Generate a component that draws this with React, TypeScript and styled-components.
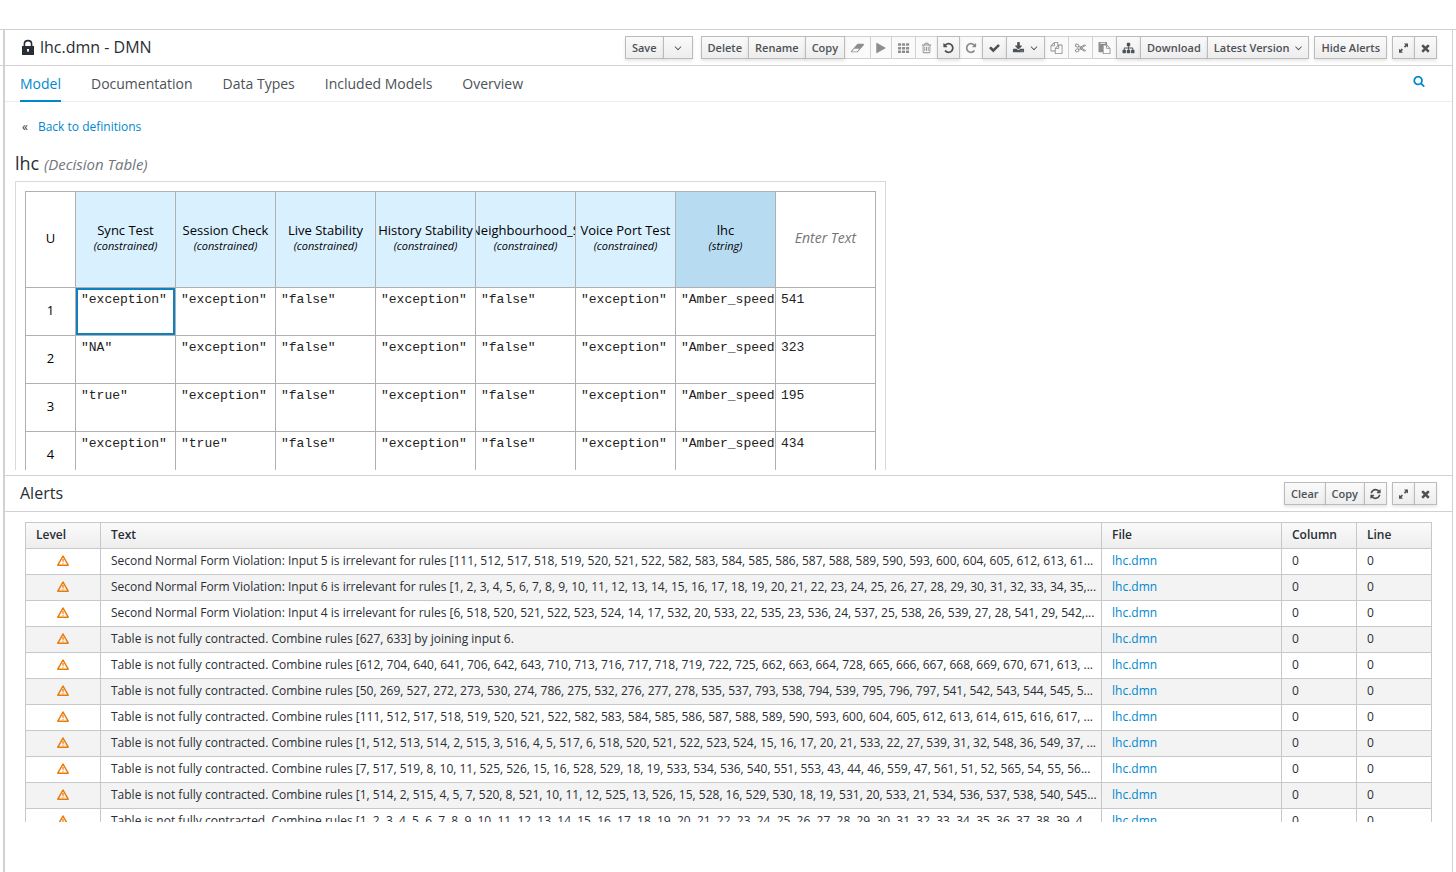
import React from "react";
import styled, { createGlobalStyle } from "styled-components";

const GlobalStyle = createGlobalStyle`
  *, *::before, *::after { box-sizing: border-box; }
  body {
    margin: 0;
    background: #fff;
    color: #363636;
    font-family: "Open Sans", "Noto Sans", sans-serif;
    font-size: 12px;
    line-height: 20px;
  }
  a { color: #0088ce; text-decoration: none; }
`;

/* ---------- icons ---------- */

const paths = {
  eraser:
    "M960 1408l336-384h-768l-336 384h768zm1013-1077q15 34 9.5 71.5t-30.5 65.5l-896 1024q-38 44-96 44h-768q-38 0-69.5-20.5t-47.5-54.5q-15-34-9.5-71.5t30.5-65.5l896-1024q38-44 96-44h768q38 0 69.5 20.5t47.5 54.5z",
  play: "M1576 927l-1328 738q-23 13-39.5 3t-16.5-36v-1472q0-26 16.5-36t39.5 3l1328 738q23 13 23 31t-23 31z",
  trash:
    "M704 736v576q0 14-9 23t-23 9h-64q-14 0-23-9t-9-23v-576q0-14 9-23t23-9h64q14 0 23 9t9 23zm256 0v576q0 14-9 23t-23 9h-64q-14 0-23-9t-9-23v-576q0-14 9-23t23-9h64q14 0 23 9t9 23zm256 0v576q0 14-9 23t-23 9h-64q-14 0-23-9t-9-23v-576q0-14 9-23t23-9h64q14 0 23 9t9 23zm128 724v-948h-896v948q0 22 7 40.5t14.5 27 10.5 8.5h832q3 0 10.5-8.5t14.5-27 7-40.5zm-672-1076h448l-48-117q-7-9-17-11h-317q-10 2-17 11zm928 32v64q0 14-9 23t-23 9h-96v948q0 83-47 143.5t-113 60.5h-832q-66 0-113-58.5t-47-141.5v-952h-96q-14 0-23-9t-9-23v-64q0-14 9-23t23-9h309l70-167q15-37 54-63t79-26h320q40 0 79 26t54 63l70 167h309q14 0 23 9t9 23z",
  undo: "M1664 896q0 156-61 298t-164 245-245 164-298 61q-172 0-327-72.5t-264-204.5q-7-10-6.5-22.5t8.5-20.5l137-138q10-9 25-9 16 2 23 12 73 95 179 147t225 52q104 0 198.5-40.5t163.5-109.5 109.5-163.5 40.5-198.5-40.5-198.5-109.5-163.5-163.5-109.5-198.5-40.5q-98 0-188 35.5t-160 101.5l137 138q31 30 14 69-17 40-59 40h-448q-26 0-45-19t-19-45v-448q0-42 40-59 39-17 69 14l130 129q107-101 244.5-156.5t284.5-55.5q156 0 298 61t245 164 164 245 61 298z",
  check:
    "M1671 566q0 40-28 68l-724 724-136 136q-28 28-68 28t-68-28l-136-136-362-362q-28-28-28-68t28-68l136-136q28-28 68-28t68 28l294 295 656-657q28-28 68-28t68 28l136 136q28 28 28 68z",
  download:
    "M1344 1344q0-26-19-45t-45-19-45 19-19 45 19 45 45 19 45-19 19-45zm256 0q0-26-19-45t-45-19-45 19-19 45 19 45 45 19 45-19 19-45zm128-224v320q0 40-28 68t-68 28h-1472q-40 0-68-28t-28-68v-320q0-40 28-68t68-28h465l135 136q58 56 136 56t136-56l136-136h464q40 0 68 28t28 68zm-325-569q17 41-14 70l-448 448q-18 19-45 19t-45-19l-448-448q-31-29-14-70 17-39 59-39h256v-448q0-26 19-45t45-19h256q26 0 45 19t19 45v448h256q42 0 59 39z",
  caret:
    "M1395 736q0 13-10 23l-466 466q-10 10-23 10t-23-10l-466-466q-10-10-10-23t10-23l50-50q10-10 23-10t23 10l393 393 393-393q10-10 23-10t23 10l50 50q10 10 10 23z",
  copy: "M1696 384q40 0 68 28t28 68v1216q0 40-28 68t-68 28h-960q-40 0-68-28t-28-68v-288h-544q-40 0-68-28t-28-68v-672q0-40 20-88t48-76l408-408q28-28 76-48t88-20h416q40 0 68 28t28 68v328q68-40 128-40h416zm-544 213l-299 299h299v-299zm-640-384l-299 299h299v-299zm196 647l316-316v-416h-384v416q0 40-28 68t-68 28h-416v640h512v-256q0-40 20-88t48-76zm956 804v-1152h-384v416q0 40-28 68t-68 28h-416v640h896z",
  paste:
    "M768 1664h896v-640h-416q-40 0-68-28t-28-68v-416h-384v1152zm256-1440v-64q0-13-9.5-22.5t-22.5-9.5h-704q-13 0-22.5 9.5t-9.5 22.5v64q0 13 9.5 22.5t22.5 9.5h704q13 0 22.5-9.5t9.5-22.5zm256 672h299l-299-299v299zm512 128v672q0 40-28 68t-68 28h-960q-40 0-68-28t-28-68v-160h-544q-40 0-68-28t-28-68v-1344q0-40 28-68t68-28h1088q40 0 68 28t28 68v328q21 13 36 28l408 408q28 28 48 76t20 88z",
  sitemap:
    "M1792 1248v320q0 40-28 68t-68 28h-320q-40 0-68-28t-28-68v-320q0-40 28-68t68-28h96v-192h-512v192h96q40 0 68 28t28 68v320q0 40-28 68t-68 28h-320q-40 0-68-28t-28-68v-320q0-40 28-68t68-28h96v-192h-512v192h96q40 0 68 28t28 68v320q0 40-28 68t-68 28h-320q-40 0-68-28t-28-68v-320q0-40 28-68t68-28h96v-192q0-52 38-90t90-38h512v-192h-96q-40 0-68-28t-28-68v-320q0-40 28-68t68-28h320q40 0 68 28t28 68v320q0 40-28 68t-68 28h-96v192h512q52 0 90 38t38 90v192h96q40 0 68 28t28 68z",
  times:
    "M1490 1322q0 40-28 68l-136 136q-28 28-68 28t-68-28l-294-294-294 294q-28 28-68 28t-68-28l-136-136q-28-28-28-68t28-68l294-294-294-294q-28-28-28-68t28-68l136-136q28-28 68-28t68 28l294 294 294-294q28-28 68-28t68 28l136 136q28 28 28 68t-28 68l-294 294 294 294q28 28 28 68z",
  search:
    "M1216 832q0-185-131.5-316.5t-316.5-131.5-316.5 131.5-131.5 316.5 131.5 316.5 316.5 131.5 316.5-131.5 131.5-316.5zm512 832q0 52-38 90t-90 38q-54 0-90-38l-343-342q-179 124-399 124-143 0-273.5-55.5t-225-150-150-225-55.5-273.5 55.5-273.5 150-225 225-150 273.5-55.5 273.5 55.5 225 150 150 225 55.5 273.5q0 220-124 399l343 343q37 37 37 90z",
  refresh:
    "M1639 1056q0 5-1 7-64 268-268 434.5t-478 166.5q-146 0-282.5-55t-243.5-157l-129 129q-19 19-45 19t-45-19-19-45v-448q0-26 19-45t45-19h448q26 0 45 19t19 45-19 45l-137 137q71 66 161 102t187 36q134 0 250-65t186-179q11-17 53-117 8-23 30-23h192q13 0 22.5 9.5t9.5 22.5zm25-800v448q0 26-19 45t-45 19h-448q-26 0-45-19t-19-45 19-45l138-138q-148-137-349-137-134 0-250 65t-186 179q-11 17-53 117-8 23-30 23h-199q-13 0-22.5-9.5t-9.5-22.5v-7q65-268 270-434.5t480-166.5q146 0 284 55.5t245 156.5l130-129q19-19 45-19t45 19 19 45z",
};

const Svg = styled.svg`
  display: block;
  flex: none;
  overflow: visible;
  fill: currentColor;
`;

/* Glyphs live on a 1792-unit em square that is 12px high. */
const Glyph = ({
  name,
  width,
  center = 896,
  mirrored = false,
}: {
  name: keyof typeof paths;
  width: number;
  center?: number;
  mirrored?: boolean;
}) => {
  const w = Math.round((width / 12) * 1792);
  return (
    <Svg width={width} height={12} viewBox={`${center - w / 2} 0 ${w} 1792`} aria-hidden>
      <path d={paths[name]} transform={mirrored ? "translate(1792 0) scale(-1 1)" : undefined} />
    </Svg>
  );
};

const GridIcon = () => (
  <Svg width={11} height={12} viewBox="0 0 11 12" aria-hidden>
    {[1.3, 4.9, 8.5].map((y) =>
      [0, 4, 8].map((x) => <rect key={`${x}-${y}`} x={x} y={y} width={3.1} height={2.5} rx={0.5} />)
    )}
  </Svg>
);

const ScissorsIcon = () => (
  <Svg width={11} height={12} viewBox="0 0 11 12" aria-hidden>
    <g fill="none" stroke="currentColor" strokeWidth={1}>
      <ellipse cx={2.2} cy={3.6} rx={1.8} ry={1.4} transform="rotate(25 2.2 3.6)" />
      <ellipse cx={2.2} cy={8.4} rx={1.8} ry={1.4} transform="rotate(-25 2.2 8.4)" />
      <path d="M3.7 4.4 6 5.8 10.6 8.6 9.4 9 5 6.8M3.7 7.6 6 6.2 10.6 3.4 9.4 3 5 5.2" />
    </g>
  </Svg>
);

const ExpandIcon = () => (
  <Svg width={9} height={12} viewBox="0 0 9 12" aria-hidden>
    <path d="M5 1.5h4v4L7.7 4.2 6.1 5.8 4.9 4.6 6.4 3zM0 6.8l1.3 1.3 1.5-1.5L4 7.8 2.5 9.3 4 10.8H0z" />
  </Svg>
);

const LockIcon = () => (
  <Svg width={12} height={16} viewBox="0 0 12 16" aria-hidden>
    <path d="M2.4 7.2V4.9C2.4 2.7 3.8 1.6 6 1.6s3.6 1.1 3.6 3.3v2.3" fill="none" stroke="currentColor" strokeWidth={1.6} />
    <path fillRule="evenodd" d="M0 7h12v9H0zM5 10v1.6l.4.3V13h1.2v-1.1l.4-.3V10z" />
  </Svg>
);

const WarningSvg = styled(Svg)`
  margin: 0 auto;
  color: #ec7a08;
`;

const WarningIcon = () => (
  <WarningSvg width={12} height={11} viewBox="0 0 12 11" role="img" aria-label="Warning">
    <path d="M6 1 11.2 10.2H.8z" fill="none" stroke="currentColor" strokeWidth={1.5} strokeLinejoin="round" />
    <path d="M5.3 4h1.4L6.5 7.1h-1zM5.4 7.7h1.2v1.1H5.4z" />
  </WarningSvg>
);

/* ---------- shell ---------- */

const Page = styled.div`
  display: flex;
  flex-direction: column;
  height: 100vh;
  min-height: 600px;
  padding-top: 29px;
  overflow: hidden;
`;

const Frame = styled.div`
  flex: 1;
  min-height: 0;
  display: flex;
  border-top: 1px solid #d1d1d1;
  padding-right: 3px;
`;

const Gutter = styled.div`
  flex: none;
  width: 3px;

  &::before {
    content: "";
    display: block;
    height: 36px;
    border-bottom: 1px solid #d1d1d1;
  }
`;

const Workbench = styled.main`
  flex: 1;
  min-width: 0;
  display: flex;
  flex-direction: column;
  border-left: 2px solid #d1d1d1;
  border-right: 1px solid #d1d1d1;
`;

const Bar = styled.header`
  flex: none;
  display: flex;
  align-items: center;
  justify-content: space-between;
  height: 36px;
  padding: 0 15px;
  border-bottom: 1px solid #d1d1d1;
`;

const Title = styled.h1<{ $indented?: boolean }>`
  display: flex;
  align-items: center;
  gap: 6px;
  margin: 0;
  padding: 0 0 2px ${(p) => (p.$indented ? "2px" : "0")};
  font-size: 16px;
  font-weight: 400;
  color: #292e34;
`;

const Toolbar = styled.div`
  display: flex;
  gap: 5px;
`;

const Group = styled.div<{ $spaced?: boolean }>`
  display: flex;
  margin-right: ${(p) => (p.$spaced ? "3px" : "0")};

  & > * + * { margin-left: -1px; }
`;

const Button = styled.button<{ $wide?: boolean }>`
  display: flex;
  align-items: center;
  justify-content: center;
  gap: 6px;
  height: 23px;
  padding: 0 ${(p) => (p.$wide ? "10px" : "6px")};
  border: 1px solid #bbb;
  background: linear-gradient(#fafafa, #ededed);
  box-shadow: 0 2px 3px rgba(3, 3, 3, 0.1);
  color: #4d5258;
  font: 600 11px/20px "Open Sans", "Noto Sans", sans-serif;
  white-space: nowrap;
  cursor: pointer;

  &:disabled {
    border-color: #d1d1d1;
    background: #fafafa;
    box-shadow: none;
    color: #8b8d8f;
    cursor: default;
  }

  &:enabled { position: relative; }
`;

/* ---------- tabs ---------- */

const Tabs = styled.nav`
  flex: none;
  display: flex;
  align-items: stretch;
  gap: 30px;
  height: 36px;
  padding: 0 27px 0 15px;
  border-bottom: 1px solid #ededed;
`;

const Tab = styled.a<{ $active?: boolean }>`
  height: 36px;
  font-size: 14px;
  line-height: 36px;
  color: ${(p) => (p.$active ? "#0088ce" : "#4d5258")};
  border-bottom: 2px solid ${(p) => (p.$active ? "#0088ce" : "transparent")};
`;

const SearchButton = styled.button`
  margin: 0 0 6px auto;
  padding: 0;
  border: 0;
  background: none;
  color: #0088ce;
  cursor: pointer;
`;

/* ---------- decision table ---------- */

const Designer = styled.section`
  flex: 1 1 0;
  min-height: 0;
  margin: 15px 10px 5px;
  overflow: auto;
  scrollbar-width: none;
`;

const BackLink = styled.div`
  display: flex;
  gap: 10px;
  padding-left: 7px;
  line-height: 20px;
`;

const Heading = styled.h2`
  margin: 14px 0 6px;
  font-size: 18px;
  font-weight: 400;
  line-height: 24px;
  color: #292e34;

  em { font-size: 15px; line-height: 20px; color: #72767b; }
`;

const Canvas = styled.div`
  width: max-content;
  padding: 9px;
  border: 1px solid #d9d9d9;
`;

const Grid = styled.table`
  width: 851px;
  table-layout: fixed;
  border-collapse: collapse;
  color: #000;

  th, td { padding: 0; border: 1px solid #b0b0b0; }
  th { padding-bottom: 4px; }
`;

const IndexCol = styled.col`
  width: 50px;
`;

const HeadCell = styled.th<{ $tone?: "input" | "output" }>`
  height: 96px;
  font-size: 13px;
  font-weight: 400;
  line-height: 16px;
  background: ${(p) => (p.$tone === "input" ? "#d9f0ff" : p.$tone === "output" ? "#b7dcf1" : "#fff")};

  small { font-size: 11px; font-style: italic; }
`;

const HeadLabel = styled.div`
  display: flex;
  flex-direction: column;
  align-items: center;
  overflow: hidden;
  white-space: nowrap;
`;

const Annotation = styled.em`
  font-size: 14px;
  color: #757575;
`;

const IndexCell = styled.th`
  height: 48px;
  font-size: 13px;
  font-weight: 400;
`;

const ValueCell = styled.td<{ $selected?: boolean }>`
  height: 48px;
  vertical-align: top;
  box-shadow: ${(p) => (p.$selected ? "inset 0 0 0 2px #0f80c0" : "none")};
`;

const Value = styled.div`
  padding: 4px 0 0 5px;
  overflow: hidden;
  white-space: nowrap;
  font: 13px/16px "Courier New", "Liberation Mono", monospace;
  color: #222;
`;

const inputs = ["Sync Test", "Session Check", "Live Stability", "History Stability", "Neighbourhood_S", "Voice Port Test"];

const rules = [
  ['"exception"', '"exception"', '"false"', '"exception"', '"false"', '"exception"', '"Amber_speed"', "541"],
  ['"NA"', '"exception"', '"false"', '"exception"', '"false"', '"exception"', '"Amber_speed"', "323"],
  ['"true"', '"exception"', '"false"', '"exception"', '"false"', '"exception"', '"Amber_speed"', "195"],
  ['"exception"', '"true"', '"false"', '"exception"', '"false"', '"exception"', '"Amber_speed"', "434"],
];

const DecisionTable = () => (
  <Canvas>
    <Grid>
      <colgroup>
        <IndexCol />
      </colgroup>
      <thead>
        <tr>
          <HeadCell>U</HeadCell>
          {inputs.map((name) => (
            <HeadCell key={name} $tone="input">
              <HeadLabel>
                {name}
                <small>(constrained)</small>
              </HeadLabel>
            </HeadCell>
          ))}
          <HeadCell $tone="output">
            <HeadLabel>
              lhc
              <small>(string)</small>
            </HeadLabel>
          </HeadCell>
          <HeadCell>
            <Annotation>Enter Text</Annotation>
          </HeadCell>
        </tr>
      </thead>
      <tbody>
        {rules.map((rule, r) => (
          <tr key={r}>
            <IndexCell>{r + 1}</IndexCell>
            {rule.map((value, c) => (
              <ValueCell key={c} $selected={r === 0 && c === 0}>
                <Value>{value}</Value>
              </ValueCell>
            ))}
          </tr>
        ))}
      </tbody>
    </Grid>
  </Canvas>
);

/* ---------- alerts ---------- */

const AlertsPanel = styled.section`
  flex: none;
  border-top: 1px solid #d1d1d1;
  padding-bottom: 50px;
`;

const AlertsScroll = styled.div`
  max-height: 300px;
  margin: 10px 20px 0;
  overflow: auto;
  scrollbar-width: none;
`;

const AlertsTable = styled.table`
  width: 100%;
  table-layout: fixed;
  border-collapse: collapse;
  color: #292e34;

  th, td {
    height: 26px;
    padding: 0 10px 2px;
    border: 1px solid #c8c8c8;
    overflow: hidden;
    white-space: nowrap;
    text-align: left;
    line-height: 20px;
  }
  th { font-weight: 600; }
  thead tr { background: linear-gradient(#fafafa, #ededed); }
  tbody tr:nth-child(even) { background: #f3f3f3; }
`;

const Col = styled.col<{ $width?: number }>`
  width: ${(p) => (p.$width ? `${p.$width}px` : "auto")};
`;

const alerts = [
  "Second Normal Form Violation: Input 5 is irrelevant for rules [111, 512, 517, 518, 519, 520, 521, 522, 582, 583, 584, 585, 586, 587, 588, 589, 590, 593, 600, 604, 605, 612, 613, 61...",
  "Second Normal Form Violation: Input 6 is irrelevant for rules [1, 2, 3, 4, 5, 6, 7, 8, 9, 10, 11, 12, 13, 14, 15, 16, 17, 18, 19, 20, 21, 22, 23, 24, 25, 26, 27, 28, 29, 30, 31, 32, 33, 34, 35,...",
  "Second Normal Form Violation: Input 4 is irrelevant for rules [6, 518, 520, 521, 522, 523, 524, 14, 17, 532, 20, 533, 22, 535, 23, 536, 24, 537, 25, 538, 26, 539, 27, 28, 541, 29, 542,...",
  "Table is not fully contracted. Combine rules [627, 633] by joining input 6.",
  "Table is not fully contracted. Combine rules [612, 704, 640, 641, 706, 642, 643, 710, 713, 716, 717, 718, 719, 722, 725, 662, 663, 664, 728, 665, 666, 667, 668, 669, 670, 671, 613, ...",
  "Table is not fully contracted. Combine rules [50, 269, 527, 272, 273, 530, 274, 786, 275, 532, 276, 277, 278, 535, 537, 793, 538, 794, 539, 795, 796, 797, 541, 542, 543, 544, 545, 5...",
  "Table is not fully contracted. Combine rules [111, 512, 517, 518, 519, 520, 521, 522, 582, 583, 584, 585, 586, 587, 588, 589, 590, 593, 600, 604, 605, 612, 613, 614, 615, 616, 617, ...",
  "Table is not fully contracted. Combine rules [1, 512, 513, 514, 2, 515, 3, 516, 4, 5, 517, 6, 518, 520, 521, 522, 523, 524, 15, 16, 17, 20, 21, 533, 22, 27, 539, 31, 32, 548, 36, 549, 37, ...",
  "Table is not fully contracted. Combine rules [7, 517, 519, 8, 10, 11, 525, 526, 15, 16, 528, 529, 18, 19, 533, 534, 536, 540, 551, 553, 43, 44, 46, 559, 47, 561, 51, 52, 565, 54, 55, 56...",
  "Table is not fully contracted. Combine rules [1, 514, 2, 515, 4, 5, 7, 520, 8, 521, 10, 11, 12, 525, 13, 526, 15, 528, 16, 529, 530, 18, 19, 531, 20, 533, 21, 534, 536, 537, 538, 540, 545...",
  "Table is not fully contracted. Combine rules [1, 2, 3, 4, 5, 6, 7, 8, 9, 10, 11, 12, 13, 14, 15, 16, 17, 18, 19, 20, 21, 22, 23, 24, 25, 26, 27, 28, 29, 30, 31, 32, 33, 34, 35, 36, 37, 38, 39, 4...",
];

const Alerts = () => (
  <AlertsPanel>
    <Bar>
      <Title as="h2">Alerts</Title>
      <Toolbar>
        <Group>
          <Button>Clear</Button>
          <Button>Copy</Button>
          <Button aria-label="Refresh"><Glyph name="refresh" width={9} /></Button>
        </Group>
        <Group>
          <Button aria-label="Expand alerts"><ExpandIcon /></Button>
          <Button aria-label="Close alerts"><Glyph name="times" width={9} /></Button>
        </Group>
      </Toolbar>
    </Bar>
    <AlertsScroll>
      <AlertsTable>
        <colgroup>
          <Col $width={75} />
          <Col />
          <Col $width={180} />
          <Col $width={75} />
          <Col $width={75} />
        </colgroup>
        <thead>
          <tr>
            <th>Level</th>
            <th>Text</th>
            <th>File</th>
            <th>Column</th>
            <th>Line</th>
          </tr>
        </thead>
        <tbody>
          {alerts.map((text) => (
            <tr key={text}>
              <td><WarningIcon /></td>
              <td>{text}</td>
              <td><a href="#lhc">lhc.dmn</a></td>
              <td>0</td>
              <td>0</td>
            </tr>
          ))}
        </tbody>
      </AlertsTable>
    </AlertsScroll>
  </AlertsPanel>
);

const tabs = ["Model", "Documentation", "Data Types", "Included Models", "Overview"];

export default function App() {
  return (
    <Page>
      <GlobalStyle />
      <Frame>
        <Gutter />
        <Workbench>
          <Bar>
            <Title $indented>
              <LockIcon />
              lhc.dmn - DMN
            </Title>
            <Toolbar>
              <Group $spaced>
                <Button>Save</Button>
                <Button $wide aria-label="Save options"><Glyph name="caret" width={8} /></Button>
              </Group>
              <Group>
                <Button>Delete</Button>
                <Button>Rename</Button>
                <Button>Copy</Button>
                <Button disabled aria-label="Erase"><Glyph name="eraser" width={13} center={1024} /></Button>
                <Button disabled aria-label="Run"><Glyph name="play" width={8} /></Button>
                <Button disabled aria-label="Grid"><GridIcon /></Button>
                <Button disabled aria-label="Remove"><Glyph name="trash" width={9} /></Button>
                <Button aria-label="Undo"><Glyph name="undo" width={9} /></Button>
                <Button disabled aria-label="Redo"><Glyph name="undo" width={10} mirrored /></Button>
                <Button aria-label="Validate"><Glyph name="check" width={11} /></Button>
                <Button aria-label="Export">
                  <Glyph name="download" width={11} />
                  <Glyph name="caret" width={8} />
                </Button>
                <Button disabled aria-label="Copy selection"><Glyph name="copy" width={11} /></Button>
                <Button disabled aria-label="Cut selection"><ScissorsIcon /></Button>
                <Button disabled aria-label="Paste selection"><Glyph name="paste" width={11} /></Button>
                <Button aria-label="Layout"><Glyph name="sitemap" width={11} /></Button>
                <Button>Download</Button>
                <Button>
                  Latest Version
                  <Glyph name="caret" width={7} />
                </Button>
              </Group>
              <Group>
                <Button>Hide Alerts</Button>
              </Group>
              <Group>
                <Button aria-label="Expand"><ExpandIcon /></Button>
                <Button aria-label="Close"><Glyph name="times" width={9} /></Button>
              </Group>
            </Toolbar>
          </Bar>
          <Tabs>
            {tabs.map((tab, i) => (
              <Tab key={tab} href="#tab" $active={i === 0}>{tab}</Tab>
            ))}
            <SearchButton aria-label="Search"><Glyph name="search" width={12} /></SearchButton>
          </Tabs>
          <Designer>
            <BackLink>
              <span>«</span>
              <a href="#definitions">Back to definitions</a>
            </BackLink>
            <Heading>
              lhc <em>(Decision Table)</em>
            </Heading>
            <DecisionTable />
          </Designer>
          <Alerts />
        </Workbench>
      </Frame>
    </Page>
  );
}
